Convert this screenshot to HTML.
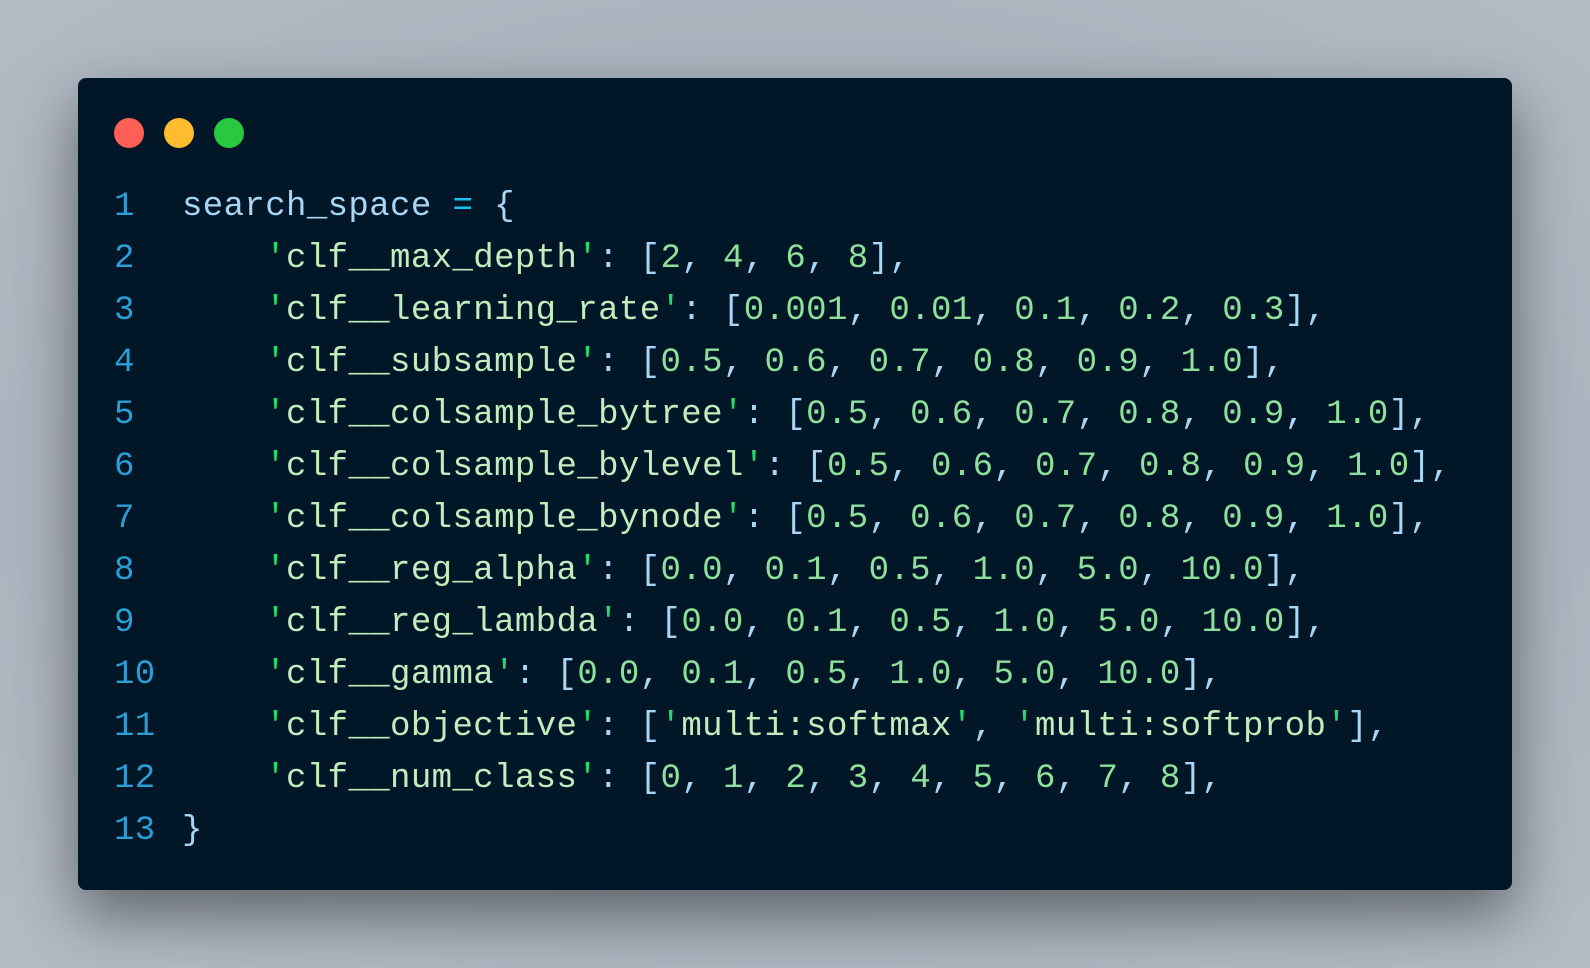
<!DOCTYPE html>
<html><head><meta charset="utf-8"><style>
html,body{margin:0;padding:0}
body{width:1590px;height:968px;overflow:hidden;background:radial-gradient(ellipse at 50% 50%,#9aa3ad 0%,#aab3bd 60%,#b3bbc4 100%);position:relative}
.card{position:absolute;left:78px;top:78px;width:1434px;height:812px;background:#011627;border-radius:8px;box-shadow:0 25px 60px rgba(0,0,0,0.45)}
.dot{position:absolute;top:118px;width:30px;height:30px;border-radius:50%}
pre{position:absolute;left:0;top:181px;margin:0;font-family:"Liberation Mono",monospace;font-size:34px;letter-spacing:0.4px;line-height:52px;color:#a9d6f5}
.ln{position:absolute;left:114px;width:60px;color:#2a9fd6}
.c{position:absolute;left:182px;white-space:pre}
.s{color:#c0ecbe}.q{color:#22da6e}.n{color:#8ee09b}.o{color:#16c2f0}.p{color:#a9d6f5}.id{color:#a9d6f5}
</style></head><body>
<div class="card"></div>
<div class="dot" style="left:114px;background:#fe5f57"></div>
<div class="dot" style="left:164px;background:#febc2e"></div>
<div class="dot" style="left:214px;background:#28c840"></div>
<pre><div class="ln" style="top:0">1</div><div class="c" style="top:0"><span class="id">search_space</span> <span class="o">=</span> {</div>
<div class="ln" style="top:52px">2</div><div class="c" style="top:52px">    <span class="q">'</span><span class="s">clf__max_depth</span><span class="q">'</span>: [<span class="n">2</span>, <span class="n">4</span>, <span class="n">6</span>, <span class="n">8</span>],</div>
<div class="ln" style="top:104px">3</div><div class="c" style="top:104px">    <span class="q">'</span><span class="s">clf__learning_rate</span><span class="q">'</span>: [<span class="n">0.001</span>, <span class="n">0.01</span>, <span class="n">0.1</span>, <span class="n">0.2</span>, <span class="n">0.3</span>],</div>
<div class="ln" style="top:156px">4</div><div class="c" style="top:156px">    <span class="q">'</span><span class="s">clf__subsample</span><span class="q">'</span>: [<span class="n">0.5</span>, <span class="n">0.6</span>, <span class="n">0.7</span>, <span class="n">0.8</span>, <span class="n">0.9</span>, <span class="n">1.0</span>],</div>
<div class="ln" style="top:208px">5</div><div class="c" style="top:208px">    <span class="q">'</span><span class="s">clf__colsample_bytree</span><span class="q">'</span>: [<span class="n">0.5</span>, <span class="n">0.6</span>, <span class="n">0.7</span>, <span class="n">0.8</span>, <span class="n">0.9</span>, <span class="n">1.0</span>],</div>
<div class="ln" style="top:260px">6</div><div class="c" style="top:260px">    <span class="q">'</span><span class="s">clf__colsample_bylevel</span><span class="q">'</span>: [<span class="n">0.5</span>, <span class="n">0.6</span>, <span class="n">0.7</span>, <span class="n">0.8</span>, <span class="n">0.9</span>, <span class="n">1.0</span>],</div>
<div class="ln" style="top:312px">7</div><div class="c" style="top:312px">    <span class="q">'</span><span class="s">clf__colsample_bynode</span><span class="q">'</span>: [<span class="n">0.5</span>, <span class="n">0.6</span>, <span class="n">0.7</span>, <span class="n">0.8</span>, <span class="n">0.9</span>, <span class="n">1.0</span>],</div>
<div class="ln" style="top:364px">8</div><div class="c" style="top:364px">    <span class="q">'</span><span class="s">clf__reg_alpha</span><span class="q">'</span>: [<span class="n">0.0</span>, <span class="n">0.1</span>, <span class="n">0.5</span>, <span class="n">1.0</span>, <span class="n">5.0</span>, <span class="n">10.0</span>],</div>
<div class="ln" style="top:416px">9</div><div class="c" style="top:416px">    <span class="q">'</span><span class="s">clf__reg_lambda</span><span class="q">'</span>: [<span class="n">0.0</span>, <span class="n">0.1</span>, <span class="n">0.5</span>, <span class="n">1.0</span>, <span class="n">5.0</span>, <span class="n">10.0</span>],</div>
<div class="ln" style="top:468px">10</div><div class="c" style="top:468px">    <span class="q">'</span><span class="s">clf__gamma</span><span class="q">'</span>: [<span class="n">0.0</span>, <span class="n">0.1</span>, <span class="n">0.5</span>, <span class="n">1.0</span>, <span class="n">5.0</span>, <span class="n">10.0</span>],</div>
<div class="ln" style="top:520px">11</div><div class="c" style="top:520px">    <span class="q">'</span><span class="s">clf__objective</span><span class="q">'</span>: [<span class="q">'</span><span class="s">multi:softmax</span><span class="q">'</span>, <span class="q">'</span><span class="s">multi:softprob</span><span class="q">'</span>],</div>
<div class="ln" style="top:572px">12</div><div class="c" style="top:572px">    <span class="q">'</span><span class="s">clf__num_class</span><span class="q">'</span>: [<span class="n">0</span>, <span class="n">1</span>, <span class="n">2</span>, <span class="n">3</span>, <span class="n">4</span>, <span class="n">5</span>, <span class="n">6</span>, <span class="n">7</span>, <span class="n">8</span>],</div>
<div class="ln" style="top:624px">13</div><div class="c" style="top:624px">}</div></pre>
</body></html>
